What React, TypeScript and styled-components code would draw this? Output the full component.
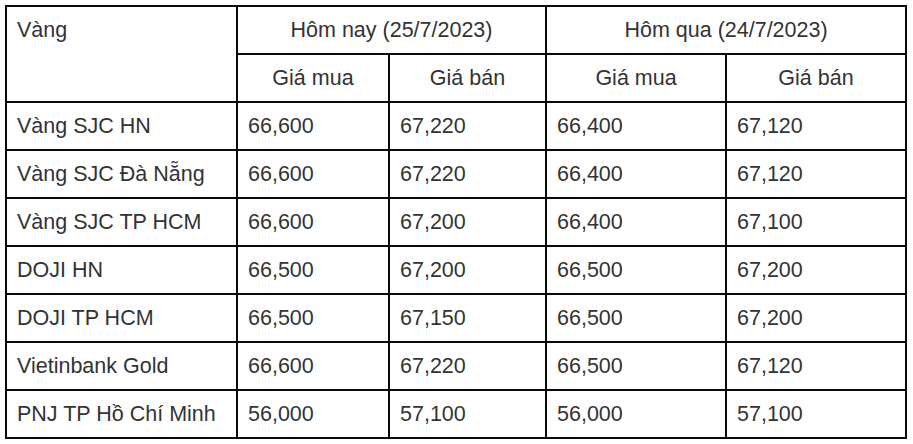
import React from 'react';
import styled, { createGlobalStyle } from 'styled-components';

interface PriceRow {
    name: string;
    todayBuy: string;
    todaySell: string;
    yesterdayBuy: string;
    yesterdaySell: string;
}

const rows: PriceRow[] = [
    { name: 'Vàng SJC HN', todayBuy: '66,600', todaySell: '67,220', yesterdayBuy: '66,400', yesterdaySell: '67,120' },
    { name: 'Vàng SJC Đà Nẵng', todayBuy: '66,600', todaySell: '67,220', yesterdayBuy: '66,400', yesterdaySell: '67,120' },
    { name: 'Vàng SJC TP HCM', todayBuy: '66,600', todaySell: '67,200', yesterdayBuy: '66,400', yesterdaySell: '67,100' },
    { name: 'DOJI HN', todayBuy: '66,500', todaySell: '67,200', yesterdayBuy: '66,500', yesterdaySell: '67,200' },
    { name: 'DOJI TP HCM', todayBuy: '66,500', todaySell: '67,150', yesterdayBuy: '66,500', yesterdaySell: '67,200' },
    { name: 'Vietinbank Gold', todayBuy: '66,600', todaySell: '67,220', yesterdayBuy: '66,500', yesterdaySell: '67,120' },
    { name: 'PNJ TP Hồ Chí Minh', todayBuy: '56,000', todaySell: '57,100', yesterdayBuy: '56,000', yesterdaySell: '57,100' },
];

const GlobalStyle = createGlobalStyle`
    body {
        margin: 0;
        background: #ffffff;
        font-family: 'Liberation Sans', Arial, sans-serif;
    }
`;

const Page = styled.div`
    padding: 5px 0 0 5px;
`;

const PriceTable = styled.table`
    width: 902px;
    table-layout: fixed;
    border-collapse: collapse;
    border: 2px solid #0a0a0a;
    font-size: 21.5px;
    color: #333333;
`;

const Row = styled.tr`
    height: 48px;
`;

const Cell = styled.td<{ $center?: boolean; $top?: boolean }>`
    border: 2px solid #0a0a0a;
    padding: 0 10px;
    text-align: ${p => (p.$center ? 'center' : 'left')};
    vertical-align: ${p => (p.$top ? 'top' : 'middle')};
    white-space: nowrap;
    line-height: 24px;
`;

const TopLabel = styled.div`
    padding-top: 11px;
`;

const App = () => {
    return (
        <Page>
            <GlobalStyle />
            <PriceTable>
                <colgroup>
                    <col style={{ width: 231 }} />
                    <col style={{ width: 152 }} />
                    <col style={{ width: 157 }} />
                    <col style={{ width: 180 }} />
                    <col style={{ width: 180 }} />
                </colgroup>
                <thead>
                    <Row>
                        <Cell rowSpan={2} $top>
                            <TopLabel>Vàng</TopLabel>
                        </Cell>
                        <Cell colSpan={2} $center>
                            Hôm nay (25/7/2023)
                        </Cell>
                        <Cell colSpan={2} $center>
                            Hôm qua (24/7/2023)
                        </Cell>
                    </Row>
                    <Row>
                        <Cell $center>Giá mua</Cell>
                        <Cell $center>Giá bán</Cell>
                        <Cell $center>Giá mua</Cell>
                        <Cell $center>Giá bán</Cell>
                    </Row>
                </thead>
                <tbody>
                    {rows.map(row => (
                        <Row key={row.name}>
                            <Cell>{row.name}</Cell>
                            <Cell>{row.todayBuy}</Cell>
                            <Cell>{row.todaySell}</Cell>
                            <Cell>{row.yesterdayBuy}</Cell>
                            <Cell>{row.yesterdaySell}</Cell>
                        </Row>
                    ))}
                </tbody>
            </PriceTable>
        </Page>
    );
};

export default App;
